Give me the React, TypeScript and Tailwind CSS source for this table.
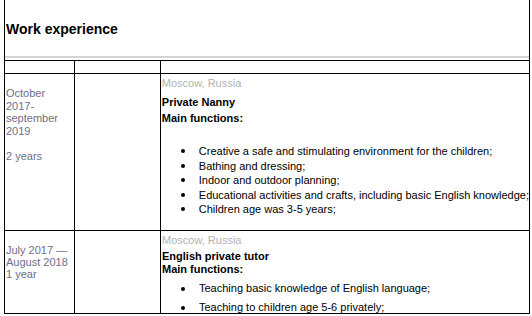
import React from "react";

type Job = {
  place: string;
  title: string;
  duties: string[];
};

const Bullet: React.FC<{ text: string }> = ({ text }) => (
  <li className="flex items-center whitespace-nowrap">
    <span className="ml-[19px] mr-[14px] h-[4px] w-[4px] shrink-0 rounded-full bg-black" />
    <span>{text}</span>
  </li>
);

const nanny: Job = {
  place: "Moscow, Russia",
  title: "Private Nanny",
  duties: [
    "Creative a safe and stimulating environment for the children;",
    "Bathing and dressing;",
    "Indoor and outdoor planning;",
    "Educational activities and crafts, including basic English knowledge;",
    "Children age was 3-5 years;",
  ],
};

const tutor: Job = {
  place: "Moscow, Russia",
  title: "English private tutor",
  duties: [
    "Teaching basic knowledge of English language;",
    "Teaching to children age 5-6 privately;",
  ],
};

export default function App() {
  return (
    <div className="h-[316px] w-[532px] overflow-hidden bg-white font-['Liberation_Sans',Arial,sans-serif] text-[11px] text-black">
      <div className="ml-[4px] w-[526px] border-x border-black">
        <div className="h-[56px] pl-[1px] pt-[21px] text-[14px] font-bold leading-[16px]">Work experience</div>
        <div className="h-[2px] bg-[#d4d4d4]" />
        <div className="h-[2px]" />

        <div className="border-t border-black">
          {/* empty header row */}
          <div className="flex h-[13px] border-b border-black">
            <div className="w-[70px] border-r border-black" />
            <div className="w-[86px] border-r border-black" />
            <div className="flex-1" />
          </div>

          {/* row 1 */}
          <div className="flex h-[157px] border-b border-black">
            <div className="w-[70px] border-r border-black pl-[1px] pt-[13px] leading-[12.5px] text-[#6e6e8a]">
              <div>October</div>
              <div>2017-</div>
              <div>september</div>
              <div>2019</div>
              <div className="h-[12.5px]" />
              <div>2 years</div>
            </div>
            <div className="w-[86px] border-r border-black" />
            <div className="flex-1 pl-[1px] pt-[2px]">
              <div className="leading-[14px] text-[#b3b3b3]">{nanny.place}</div>
              <div className="mt-[5px] font-bold leading-[14px]">{nanny.title}</div>
              <div className="mt-[2px] font-bold leading-[14px]">Main functions:</div>
              <ul className="mt-[19px] leading-[14.5px]">
                {nanny.duties.map((d) => (
                  <Bullet key={d} text={d} />
                ))}
              </ul>
            </div>
          </div>

          {/* row 2 */}
          <div className="flex h-[83px] border-b border-black">
            <div className="w-[70px] border-r border-black pl-[1px] pt-[13px] leading-[12px] text-[#6e6e8a]">
              <div>July 2017 —</div>
              <div>August 2018</div>
              <div>1 year</div>
            </div>
            <div className="w-[86px] border-r border-black" />
            <div className="flex-1 pl-[1px] pt-[2px]">
              <div className="leading-[14px] text-[#b3b3b3]">{tutor.place}</div>
              <div className="mt-[3px] font-bold leading-[13px]">{tutor.title}</div>
              <div className="font-bold leading-[13px]">Main functions:</div>
              <ul className="mt-[3px] leading-[19.4px]">
                {tutor.duties.map((d) => (
                  <Bullet key={d} text={d} />
                ))}
              </ul>
            </div>
          </div>
        </div>
      </div>
    </div>
  );
}
